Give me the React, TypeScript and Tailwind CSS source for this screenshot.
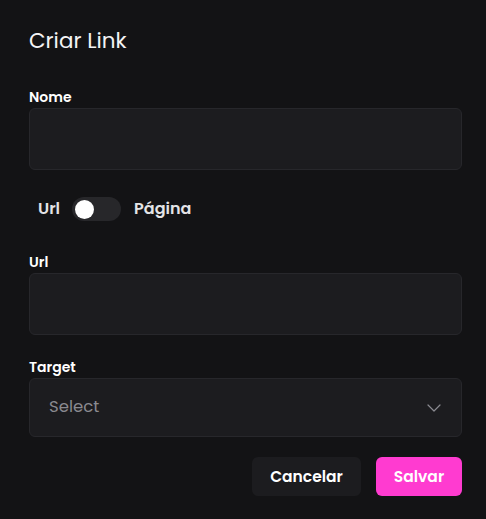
import { ChevronDown } from 'lucide-react'

const font = { fontFamily: 'Poppins, Inter, "Noto Sans", sans-serif' }

const Field = ({ label, children }: { label: string; children: React.ReactNode }) => (
  <div className="flex flex-col gap-[1px]">
    <label className="text-[14px] font-semibold leading-5 text-white">{label}</label>
    {children}
  </div>
)

export default function App() {
  return (
    <div className="min-h-[519px] w-full bg-[#131315] pl-[29px] pr-[24px] pt-[26px] text-white" style={font}>
      <h2 className="text-[21.5px] font-normal leading-[30px] text-[#f4f4f5]">Criar Link</h2>

      <div className="mt-[31px]">
        <Field label="Nome">
          <input className="h-[62px] w-full rounded-md border border-[#27272b] bg-[#1c1c1f] outline-none" />
        </Field>
      </div>

      <div className="mt-[27px] flex items-center pl-[9px]">
        <span className="text-[16px] font-semibold text-[#e4e4e7]">Url</span>
        <div className="ml-[12px] flex h-[24px] w-[49px] items-center rounded-full bg-[#27272a] px-[3px]">
          <div className="h-[19px] w-[19px] rounded-full bg-white" />
        </div>
        <span className="ml-[13px] text-[16px] font-semibold text-[#e4e4e7]">Página</span>
      </div>

      <div className="mt-[31px]">
        <Field label="Url">
          <input className="h-[62px] w-full rounded-md border border-[#27272b] bg-[#1c1c1f] outline-none" />
        </Field>
      </div>

      <div className="mt-[22px]">
        <Field label="Target">
          <div className="flex h-[59px] w-full items-center justify-between rounded-md border border-[#27272b] bg-[#1c1c1f] pl-[19px] pr-[15px]">
            <span className="text-[16.5px] text-[#8a8a90]">Select</span>
            <ChevronDown className="h-[24px] w-[24px] text-[#8a8a90]" strokeWidth={1.2} />
          </div>
        </Field>
      </div>

      <div className="mt-[20px] flex justify-end gap-[15px]">
        <button className="h-[39px] w-[109px] rounded-md bg-[#1c1c1f] text-[15.5px] font-semibold text-white">
          Cancelar
        </button>
        <button className="h-[39px] w-[86px] rounded-md bg-[#ff3bd0] text-[15.5px] font-semibold text-white">
          Salvar
        </button>
      </div>
    </div>
  )
}
